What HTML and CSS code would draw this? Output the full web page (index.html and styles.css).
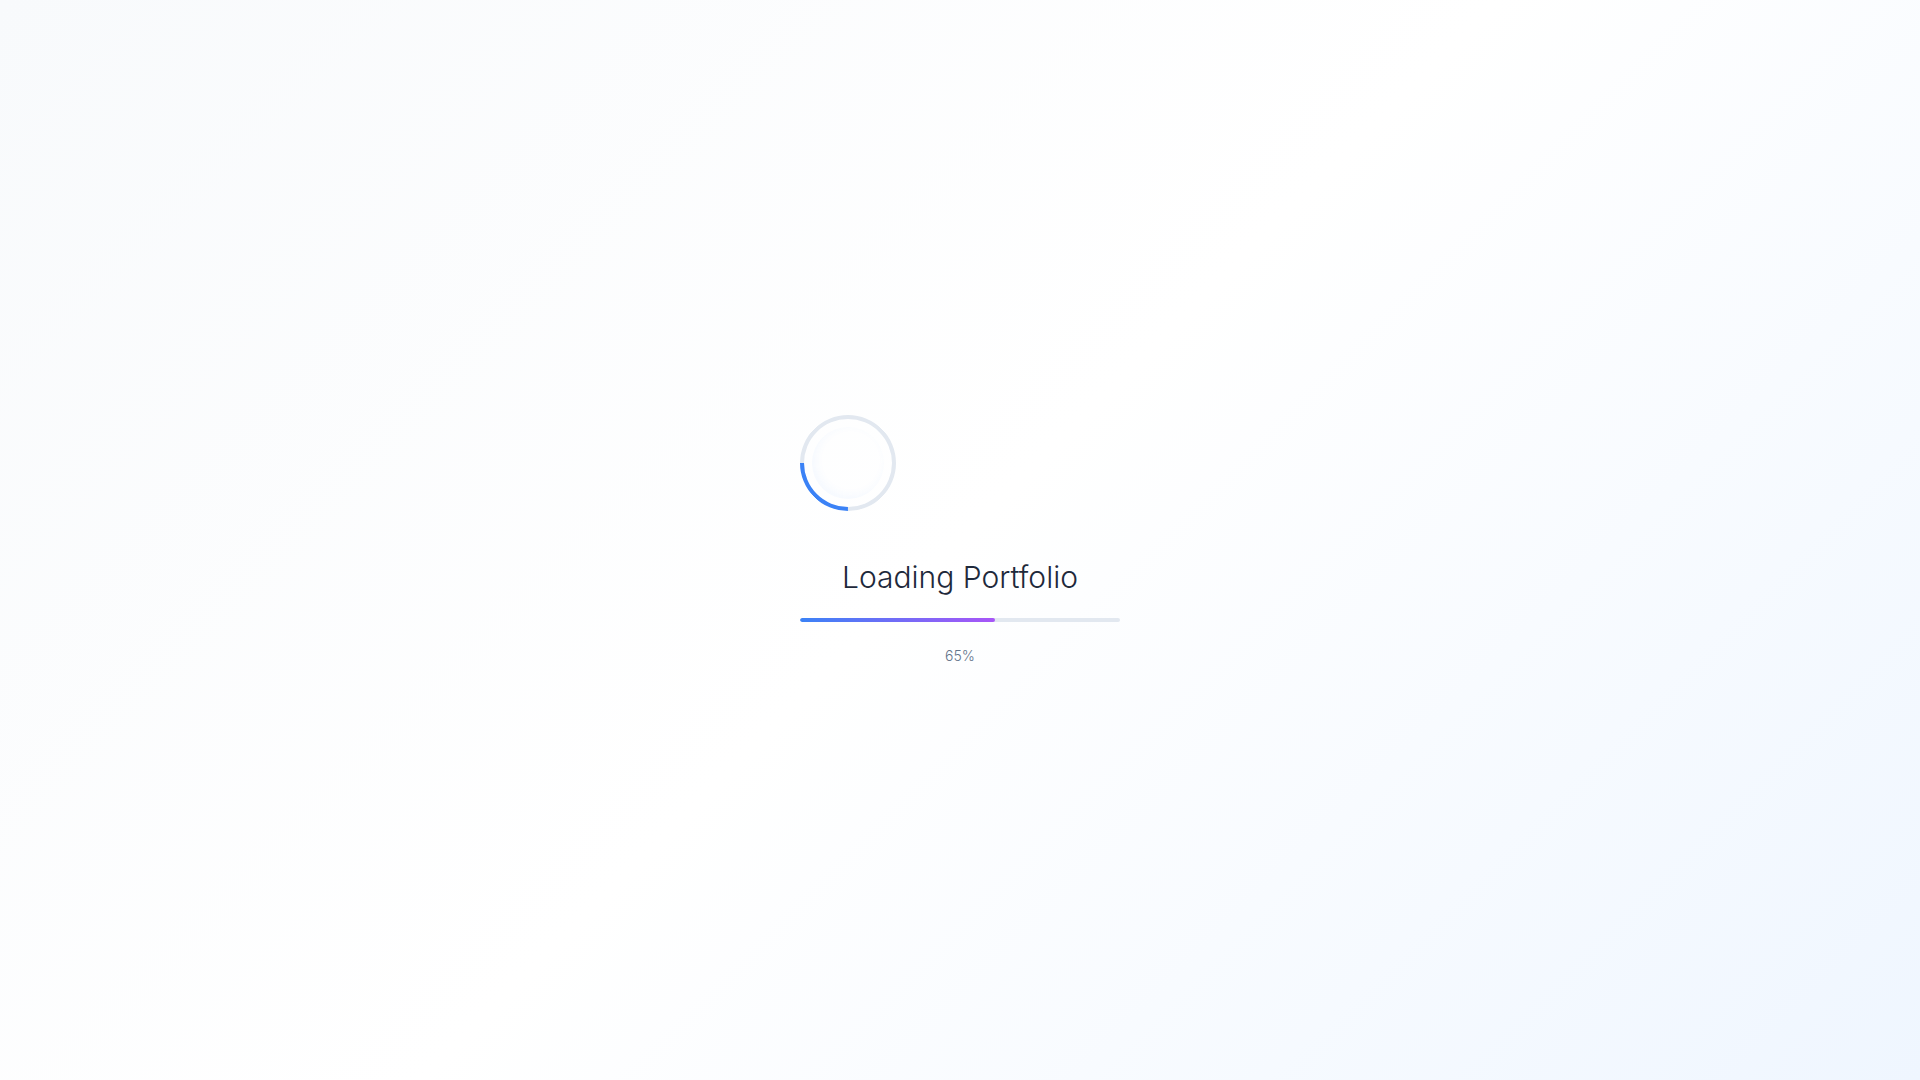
FILE: index.html
```html
<!DOCTYPE html>
<html lang="en">
<head>
  <meta charset="UTF-8" />
  <meta name="viewport" content="width=device-width, initial-scale=1" />
  <title>Loading Portfolio</title>
  <link rel="stylesheet" href="styles.css">
</head>
<body>
  <main class="loader">
    <div class="loader-box">
      <div class="spinner">
        <span class="spinner-glow"></span>
      </div>
      <h1 class="loader-title">Loading Portfolio</h1>
      <div class="progress">
        <div class="progress-fill" style="width: 61%"></div>
      </div>
      <div class="progress-label">65%</div>
    </div>
  </main>
</body>
</html>
```

FILE: styles.css
```css
:root {
  --text-color: #1e293b;
  --muted: #64748b;
  --track: #e2e8f0;
  --blue: #3b82f6;
  --purple: #a855f7;
}

html,
body {
  height: 100%;
}

body {
  margin: 0;
  font-family: Inter, "Noto Sans", sans-serif;
  color: var(--text-color);
  background: linear-gradient(135deg, #f8fafc 0%, #ffffff 50%, #eff6ff 100%);
}

.loader {
  min-height: 100vh;
  display: flex;
  align-items: center;
  justify-content: center;
}

.loader-box {
  width: 320px;
  display: flex;
  flex-direction: column;
}

.spinner {
  position: relative;
  width: 96px;
  height: 96px;
  box-sizing: border-box;
  border: 4px solid var(--track);
  border-top-color: var(--blue);
  border-radius: 50%;
  transform: rotate(225deg);
}

.spinner-glow {
  position: absolute;
  inset: 8px;
  border-radius: 50%;
  box-shadow: inset 0 4px 10px rgba(59, 130, 246, 0.05);
}

.loader-title {
  margin: 46px 0 0;
  font-size: 30px;
  line-height: 40px;
  font-weight: 300;
  text-align: center;
  color: var(--text-color);
}

.progress {
  margin-top: 21px;
  height: 4px;
  border-radius: 2px;
  background-color: var(--track);
  overflow: hidden;
}

.progress-fill {
  height: 100%;
  border-radius: 2px;
  background: linear-gradient(90deg, var(--blue), var(--purple));
}

.progress-label {
  margin-top: 24px;
  font-size: 14px;
  line-height: 20px;
  font-weight: 300;
  text-align: center;
  color: var(--muted);
}
```
